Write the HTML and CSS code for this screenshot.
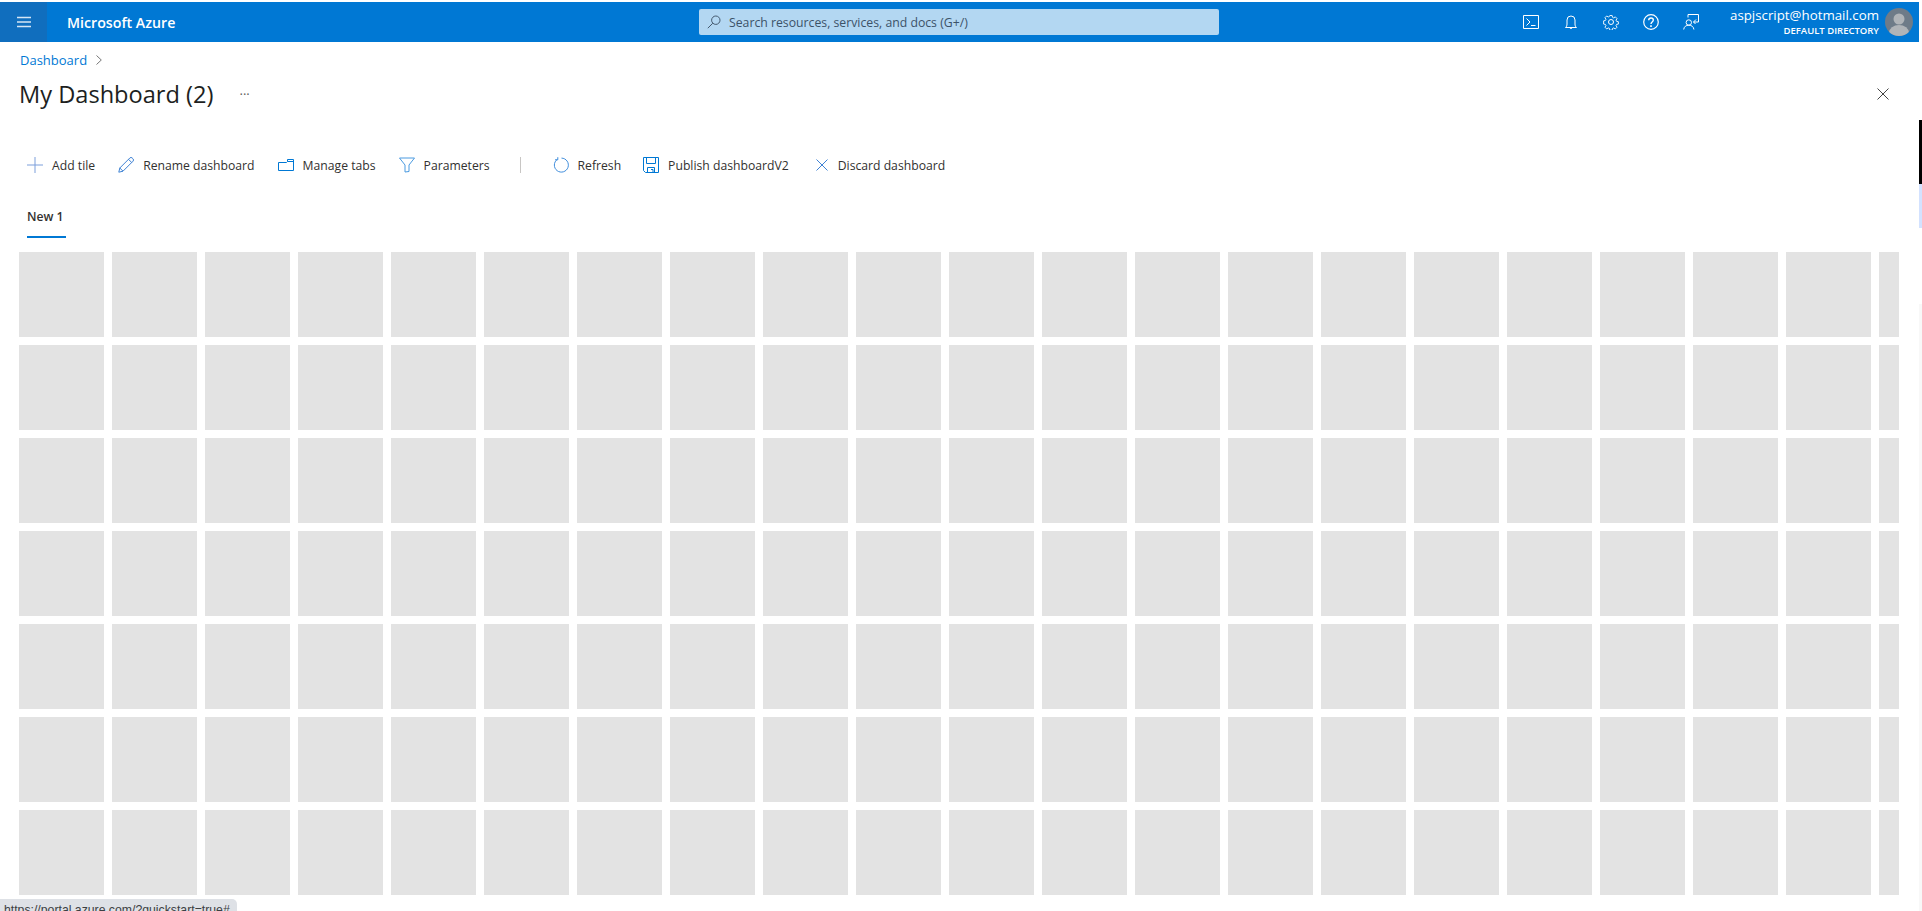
FILE: index.html
```html
<!DOCTYPE html>
<html lang="en">
<head>
  <meta charset="UTF-8">
  <title>My Dashboard (2) - Microsoft Azure</title>
  <link rel="stylesheet" href="styles.css">
</head>
<body>
  <div class="page">
    <header class="topbar">
      <button class="menu-btn" aria-label="Menu">
        <svg width="16" height="16" viewBox="0 0 16 16"><path d="M1 3.500h14M1 8h14M1 12.500h14" stroke="#d5e6f5" stroke-width="1.300" fill="none"/></svg>
      </button>
      <div class="brand">Microsoft Azure</div>
      <div class="search">
        <svg width="14" height="14" viewBox="0 0 14 14" fill="none" stroke="#44596e" stroke-width="1"><circle cx="8.800" cy="5.200" r="4.200"/><path d="M5.800 8.200L.8 13.200"/></svg>
        <span>Search resources, services, and docs (G+/)</span>
      </div>
      <div class="top-icons">
        <svg width="16" height="16" viewBox="0 0 16 16" fill="none" stroke="#fff"><path d="M.5 1.500h15v13H.5z"/><path d="M3.500 4.500L7 8l-3.500 3.500M8 11.500h4.500"/></svg>
        <svg width="16" height="16" viewBox="0 0 16 16" fill="none" stroke="#fff"><path d="M2.500 13.500c1.200-1 1.500-2 1.500-3.500V6a4 4 0 0 1 8 0v4c0 1.500.3 2.500 1.500 3.500z"/><path d="M6.800 13.800a1.300 1.300 0 0 0 2.400 0"/></svg>
        <svg width="16" height="16" viewBox="0 0 16 16" fill="none" stroke="#fff"><circle cx="8" cy="8" r="2.500"/><path d="M6.700.8h2.600l.4 2 1.300.6 1.800-1.100 1.900 1.900-1.100 1.800.6 1.300 2 .4v2.600l-2 .4-.6 1.300 1.100 1.800-1.900 1.900-1.800-1.100-1.300.6-.4 2H6.700l-.4-2-1.300-.6-1.800 1.100-1.900-1.900 1.100-1.800-.6-1.300-2-.4V6.700l2-.4.600-1.300-1.100-1.800 1.900-1.900 1.800 1.100 1.300-.6z" transform="translate(.8 .8) scale(.9)"/></svg>
        <svg width="16" height="16" viewBox="0 0 16 16" fill="none" stroke="#fff" stroke-width="1.200"><circle cx="8" cy="8" r="7.300"/><path d="M5.700 6.200C5.700 4.800 6.800 4 8 4s2.300.9 2.300 2.100c0 1.900-2.300 1.900-2.300 3.800" stroke-width="1.400"/><path d="M7.200 11.300h1.600v1.600H7.200z" fill="#fff" stroke="none"/></svg>
        <svg width="16" height="16" viewBox="0 0 16 16" fill="none" stroke="#fff"><circle cx="5.800" cy="8.500" r="2.700"/><path d="M.7 15.500c.3-2.800 2.300-4.300 5.100-4.300s4.800 1.500 5.100 4.300"/><path d="M5 3.500V.5h10.500v7.500h-5M13 5.500L10.500 8l2 2"/></svg>
      </div>
      <div class="account">
        <div class="account-name">aspjscript@hotmail.com</div>
        <div class="account-dir">DEFAULT DIRECTORY</div>
      </div>
      <svg class="avatar" width="28" height="28" viewBox="0 0 28 28"><defs><clipPath id="av"><circle cx="14" cy="14" r="14"/></clipPath></defs><circle cx="14" cy="14" r="14" fill="#6e7b88"/><g clip-path="url(#av)" fill="#b0b4b8"><circle cx="14" cy="11" r="5.500"/><ellipse cx="14" cy="25" rx="10" ry="8"/></g></svg>
    </header>

    <main class="content">
      <nav class="crumbs">
        <a href="#">Dashboard</a>
        <svg width="6" height="10" viewBox="0 0 6 10" fill="none" stroke="#777"><path d="M.5.500L5.300 5 .5 9.500"/></svg>
      </nav>

      <div class="title-row">
        <h1>My Dashboard (2)</h1>
        <span class="more">···</span>
        <svg class="close" width="12" height="12" viewBox="0 0 12 12" stroke="#444" fill="none"><path d="M.5.500l11 11M11.500.500l-11 11"/></svg>
      </div>

      <div class="toolbar">
        <a class="tool" href="#">
          <svg width="16" height="16" viewBox="0 0 16 16" stroke="#7d9fdb" fill="none"><path d="M0 8h16M8 0v16"/></svg>
          Add tile</a>
        <a class="tool" href="#">
          <svg width="16" height="16" viewBox="0 0 16 16" stroke="#3f82d4" fill="none"><path d="M.8 15.200l1-4.200L11.800 1a1.700 1.700 0 0 1 2.400 0l.8.8a1.700 1.700 0 0 1 0 2.400L5 14.200zM1.800 11L5 14.200M10.500 2.300l3.200 3.200"/></svg>
          Rename dashboard</a>
        <a class="tool" href="#">
          <svg width="16" height="12" viewBox="0 0 16 12" stroke="#0078d4" fill="none"><path d="M.5 3.500h8l1-1v-2h6v11H.5zM9.500 2.500h6"/></svg>
          Manage tabs</a>
        <a class="tool" href="#">
          <svg width="16" height="16" viewBox="0 0 16 16" stroke="#4a9ae0" fill="none"><path d="M.5 1h15L10 8v6.500L6 15V8z"/></svg>
          Parameters</a>
        <span class="tool-sep"></span>
        <a class="tool tool-refresh" href="#">
          <svg width="16" height="16" viewBox="0 0 16 16" stroke="#3f8ddc" fill="none"><path d="M8.500 1.100A7 7 0 1 1 4.300 2.400M4.800.2v2.600H2"/></svg>
          Refresh</a>
        <a class="tool" href="#">
          <svg width="16" height="16" viewBox="0 0 16 16" stroke="#0078d4" fill="none"><path d="M.5.500h15v15h-13l-2-2zM3.500.5v6h9v-6M4.500 15.500v-5h7v5M8 12.500h2v3"/></svg>
          Publish dashboardV2</a>
        <a class="tool tool-discard" href="#">
          <svg width="12" height="12" viewBox="0 0 12 12" stroke="#3f82d4" fill="none"><path d="M.5.500l11 11M11.500.500l-11 11"/></svg>
          Discard dashboard</a>
      </div>

      <div class="tabs">
        <div class="tab">New 1</div>
      </div>

      <div class="tile-grid" id="tiles"></div>
    </main>
  </div>

  <div class="scroll-strip">
    <div class="strip-thumb"></div>
    <div class="strip-blue"></div>
    <div class="strip-gap"></div>
    <div class="strip-rest"></div>
  </div>

  <div class="status-bubble">https://portal.azure.com/?quickstart=true#</div>

  <script>
    // 21 columns x 7 rows of empty tiles, the last column gets clipped
    const tiles = document.getElementById("tiles");
    for (let i = 0; i < 147; i++) {
      const tile = document.createElement("div");
      tile.classList.add("tile");
      tiles.appendChild(tile);
    }
  </script>
</body>
</html>
```

FILE: styles.css
```css
* {
  box-sizing: border-box;
}

html, body {
  height: 100%;
}

body {
  margin: 0;
  display: flex;
  overflow: hidden;
  background: #fff;
  font-family: "Open Sans", "Liberation Sans", sans-serif;
  color: #323130;
}

a {
  text-decoration: none;
}

.page {
  flex: 1;
  min-width: 0;
  padding-top: 2px;
}

/* Top bar */
.topbar {
  display: flex;
  align-items: center;
  height: 40px;
  background: #0078d4;
  color: #fff;
}

.menu-btn {
  display: flex;
  align-items: center;
  justify-content: center;
  width: 47px;
  height: 40px;
  padding: 0;
  border: none;
  background: #106ebe;
}

.brand {
  width: 632px;
  margin-left: 20px;
  font-size: 14.200px;
  font-weight: 600;
  white-space: nowrap;
}

.search {
  display: flex;
  align-items: center;
  gap: 8px;
  width: 520px;
  height: 26px;
  padding-left: 8px;
  border-radius: 2px;
  background: #b3d7f2;
  color: #3c5268;
  font-size: 12.250px;
}

.top-icons {
  display: flex;
  gap: 24px;
  margin-left: 304px;
}

.account {
  margin-left: auto;
  text-align: right;
  white-space: nowrap;
}

.account-name {
  font-size: 13.300px;
  line-height: 17px;
}

.account-dir {
  font-size: 9.500px;
  font-weight: 600;
  line-height: 14px;
}

.avatar {
  margin: 0 6px;
}

/* Page header */
.content {
  padding: 0 20px 0 19px;
}

.crumbs {
  display: flex;
  align-items: center;
  gap: 9px;
  height: 36px;
  padding-left: 1px;
  font-size: 13px;
}

.crumbs a {
  color: #0078d4;
}

.title-row {
  display: flex;
  align-items: center;
  height: 32px;
}

.title-row h1 {
  margin: 0;
  font-size: 23.600px;
  font-weight: 400;
  color: #201f1e;
}

.more {
  margin-left: 26px;
  color: #605e5c;
  font-size: 13px;
}

.close {
  margin-left: auto;
  margin-right: 10px;
}

/* Toolbar */
.toolbar {
  display: flex;
  align-items: center;
  height: 24px;
  margin-top: 43px;
  padding-left: 8px;
}

.tool {
  display: flex;
  align-items: center;
  gap: 9px;
  margin-right: 23px;
  color: #323130;
  font-size: 12.200px;
  white-space: nowrap;
}

.tool-sep {
  width: 1px;
  height: 16px;
  margin: 0 32px 0 7px;
  background: #c8c6c4;
}

.tool-refresh {
  margin-right: 22px;
}

.tool-discard {
  gap: 10px;
  margin-left: 4px;
}

/* Tabs */
.tabs {
  display: flex;
  height: 39px;
  margin-top: 22px;
  padding-left: 8px;
}

.tab {
  width: 39px;
  height: 39px;
  padding-top: 9px;
  border-bottom: 2px solid #0078d4;
  font-size: 12.150px;
  font-weight: 600;
  white-space: nowrap;
}

/* Tiles */
.tile-grid {
  display: grid;
  grid-template-columns: repeat(21, 85px);
  grid-auto-rows: 85px;
  gap: 8px;
  overflow: hidden;
  margin-top: 14px;
}

.tile {
  background: #e3e3e3;
}

/* Right edge strip */
.scroll-strip {
  display: flex;
  flex-direction: column;
  flex: 0 0 3px;
  padding-top: 120px;
}

.strip-thumb {
  height: 64px;
  background: #000;
}

.strip-blue {
  height: 44px;
  background: #d3e2ff;
}

.strip-gap {
  height: 76px;
}

.strip-rest {
  flex: 1;
  background: #f8f8f8;
}

/* Link hover status */
.status-bubble {
  position: fixed;
  left: 0;
  bottom: 0;
  width: 237px;
  height: 12px;
  padding: 4px 0 0 4px;
  overflow: hidden;
  border-top-right-radius: 5px;
  background: #dee1e6;
  color: #3c4043;
  font-family: "Liberation Sans", sans-serif;
  font-size: 12.250px;
  line-height: 14px;
  white-space: nowrap;
}
```
